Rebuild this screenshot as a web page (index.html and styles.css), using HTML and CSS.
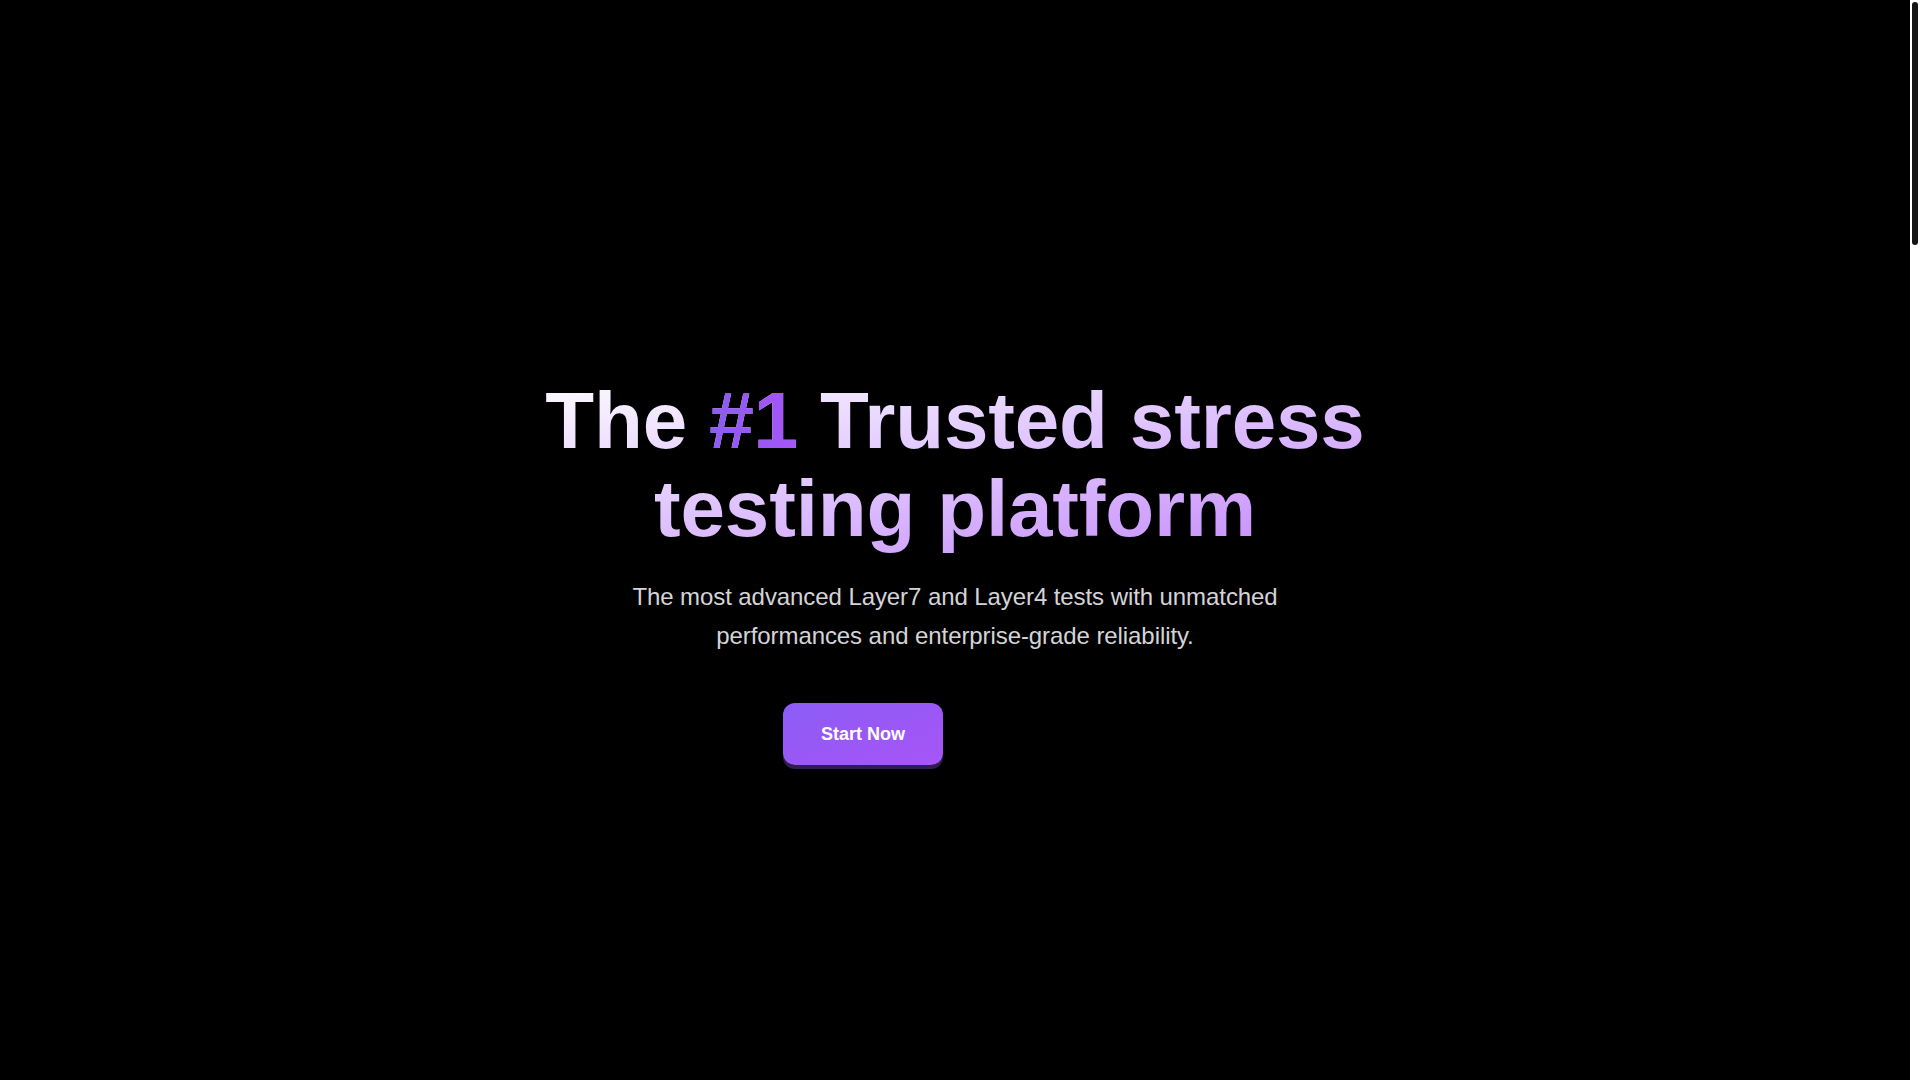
FILE: index.html
```html
<!DOCTYPE html>
<html lang="en">
<head>
<meta charset="utf-8">
<title>Stress testing platform</title>
<link rel="stylesheet" href="styles.css">
</head>
<body>
<main class="page">
  <section class="hero">
    <div class="hero-inner">
      <h1 class="title">The <span class="accent">#1</span> Trusted stress testing platform</h1>
      <p class="subtitle">The most advanced Layer7 and Layer4 tests with unmatched performances and enterprise-grade reliability.</p>
      <div class="actions">
        <a class="btn-primary" href="#">Start Now</a>
        <span class="btn-ghost" aria-hidden="true"></span>
      </div>
    </div>
  </section>
  <section class="below"></section>
</main>
<div class="scrollbar" aria-hidden="true"><div class="scrollbar-thumb"></div></div>
</body>
</html>
```

FILE: styles.css
```css
html {
  background: #000;
  scrollbar-width: none;
}
html::-webkit-scrollbar {
  display: none;
}
body {
  margin: 0;
  padding-right: 10px;
  background: #000;
  color: #fff;
  font-family: "Liberation Sans", Arial, sans-serif;
}
.page {
  display: flex;
  flex-direction: column;
}
.hero {
  min-height: 1080px;
  box-sizing: border-box;
  padding-top: 62px;
  display: flex;
  align-items: center;
  justify-content: center;
}
.hero-inner {
  display: flex;
  flex-direction: column;
  align-items: center;
  text-align: center;
}
.title {
  margin: 0;
  font-size: 80px;
  line-height: 88px;
  font-weight: 700;
  letter-spacing: -0.15px;
  max-width: 900px;
  background: linear-gradient(to bottom right, #ffffff 0%, #e3ccff 42%, #c386fc 100%);
  -webkit-background-clip: text;
  background-clip: text;
  color: transparent;
}
.accent {
  background: linear-gradient(to right, #8b5cf6, #a855f7);
  -webkit-background-clip: text;
  background-clip: text;
  color: transparent;
}
.subtitle {
  margin: 24px 0 0;
  max-width: 672px;
  font-size: 24px;
  line-height: 39px;
  letter-spacing: -0.08px;
  color: #d4d4d8;
}
.actions {
  margin-top: 48px;
  display: flex;
  gap: 16px;
}
.btn-primary {
  display: flex;
  align-items: center;
  justify-content: center;
  width: 160px;
  height: 62px;
  box-sizing: border-box;
  border-radius: 12px;
  background: linear-gradient(to bottom right, #8b5cf6, #a855f7);
  box-shadow: 0 4px 0 #2f1d52;
  color: #fff;
  font-size: 18px;
  font-weight: 700;
  text-decoration: none;
}
.btn-ghost {
  width: 168px;
  height: 62px;
}
.below {
  height: 3680px;
}
.scrollbar {
  position: fixed;
  top: 0;
  right: 0;
  width: 10px;
  height: 100vh;
  background: #fff;
  box-sizing: border-box;
  padding: 2px;
}
.scrollbar-thumb {
  height: 243px;
  background: #151515;
  border-radius: 4px;
}
```
